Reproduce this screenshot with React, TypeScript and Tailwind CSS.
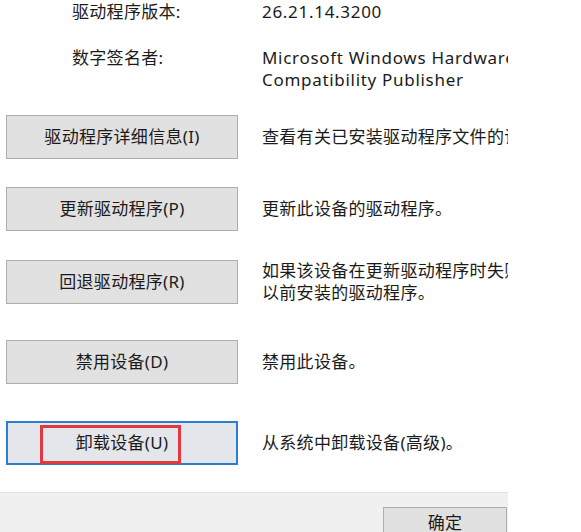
import React from "react";

type ActionRow = {
  label: string;
  desc: string[];
  mt: string;
  focused?: boolean;
};

const font = "font-['Noto_Sans','Noto_Sans_CJK_SC',sans-serif]";

const rows: ActionRow[] = [
  { label: "驱动程序详细信息(I)", desc: ["查看有关已安装驱动程序文件的详细信息。"], mt: "mt-[24px]" },
  { label: "更新驱动程序(P)", desc: ["更新此设备的驱动程序。"], mt: "mt-[28px]" },
  {
    label: "回退驱动程序(R)",
    desc: ["如果该设备在更新驱动程序时失败，则回退到", "以前安装的驱动程序。"],
    mt: "mt-[29px]",
  },
  { label: "禁用设备(D)", desc: ["禁用此设备。"], mt: "mt-[36px]" },
  { label: "卸载设备(U)", desc: ["从系统中卸载设备(高级)。"], mt: "mt-[37px]", focused: true },
];

const App = () => {
  return (
    <div className={`w-[581px] h-[532px] bg-white ${font} text-[#1b1b1b] text-[17px] tracking-[0.3px]`}>
      <div className="w-[508px] h-[532px] overflow-hidden flex flex-col">
        <div className="flex-1 bg-white">
          <div className="flex leading-[24px]">
            <span className="w-[262px] pl-[72px] shrink-0">驱动程序版本:</span>
            <span className="whitespace-nowrap tracking-[0.7px]">26.21.14.3200</span>
          </div>
          <div className="flex leading-[22px] mt-[23px]">
            <span className="w-[262px] pl-[72px] shrink-0">数字签名者:</span>
            <div className="whitespace-nowrap tracking-[0.7px]">
              <p>Microsoft Windows Hardware</p>
              <p>Compatibility Publisher</p>
            </div>
          </div>
          {rows.map((row) => (
            <div key={row.label} className={`flex items-center ${row.mt}`}>
              <div className="w-[262px] shrink-0 pl-[6px]">
                {row.focused ? (
                  <div className="relative w-[232px] h-[44px] border-2 border-[#2a7fd4] bg-[#e3e7ec] flex items-center justify-center">
                    {row.label}
                    <div className="absolute left-[32px] top-[2px] w-[141px] h-[39px] border-[3px] border-[#e03a3e]" />
                  </div>
                ) : (
                  <div className="w-[232px] h-[44px] border border-[#adadad] bg-[#e1e1e1] flex items-center justify-center">
                    {row.label}
                  </div>
                )}
              </div>
              <div className="whitespace-nowrap leading-[22px]">
                {row.desc.map((d) => (
                  <p key={d}>{d}</p>
                ))}
              </div>
            </div>
          ))}
        </div>
        <div className="h-[40px] bg-[#f0f0f0] border-t border-[#e4e4e4]">
          <div className="ml-[383px] mt-[14px] w-[124px] h-[30px] border border-[#adadad] bg-[#e1e1e1] flex justify-center pt-[2px]">
            确定
          </div>
        </div>
      </div>
    </div>
  );
};

export default App;
